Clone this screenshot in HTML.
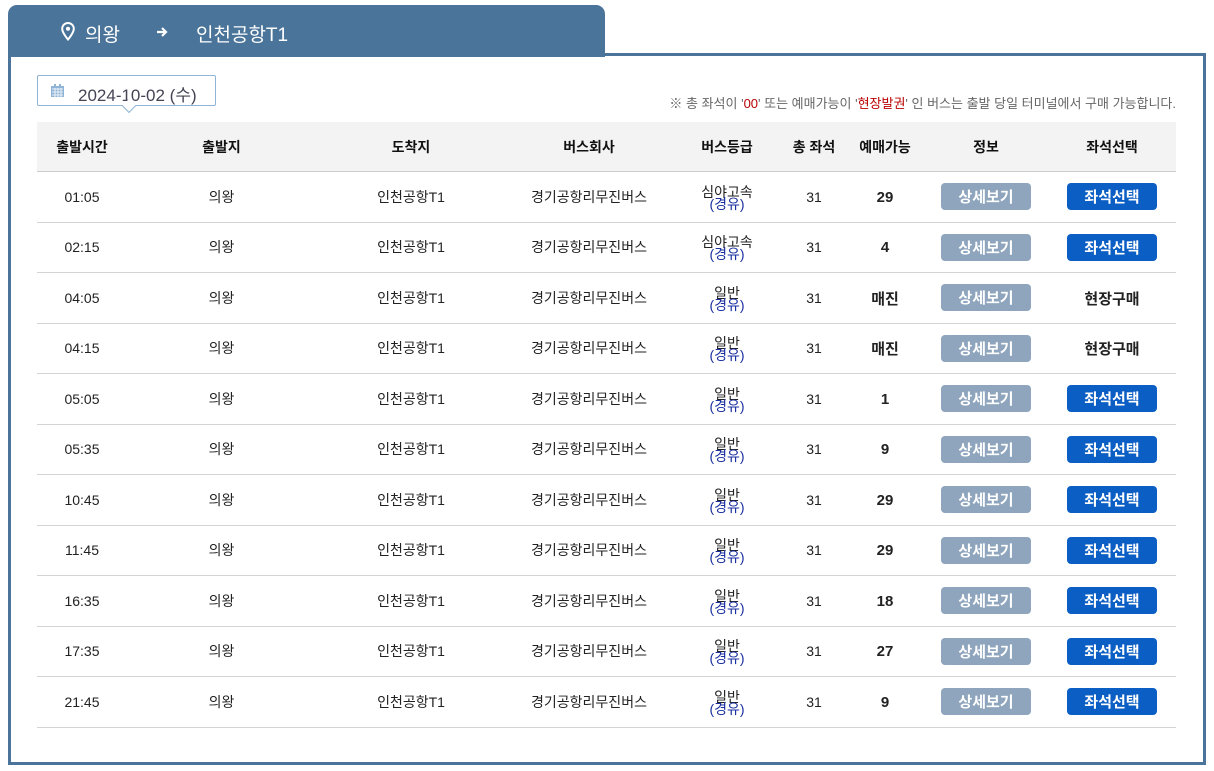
<!DOCTYPE html>
<html><head><meta charset="utf-8"><style>
*{margin:0;padding:0;box-sizing:border-box}
body{width:1214px;height:771px;background:#fff;position:relative;font-family:"Liberation Sans","Noto Sans CJK KR","NanumGothic",sans-serif;color:#222;overflow:hidden}
.tab{position:absolute;left:8px;top:5px;width:597px;height:52px;background:#4a7499;border-radius:9px 9px 0 0}
.tab span{position:absolute;top:15px;color:#fff;font-size:19px}
.box{position:absolute;left:8px;top:53px;width:1198px;height:712px;border:3px solid #4a7499;border-top:none}
.boxtop{position:absolute;left:605px;top:53px;width:601px;height:3px;background:#4a7499}
.date{position:absolute;left:37px;top:75px;width:179px;height:31px;border:1px solid #8fb4d6;border-radius:2px;font-size:17px;color:#445;padding:5px 0 0 40px}
.date:after{content:"";position:absolute;left:86px;bottom:-6px;width:9px;height:9px;background:#fff;border-right:1px solid #8fb4d6;border-bottom:1px solid #8fb4d6;transform:rotate(45deg)}
.note{position:absolute;right:38px;top:93px;font-size:13px;color:#666}
.note b{font-weight:normal;color:#b00}
.hdr{position:absolute;left:37px;top:122px;width:1139px;height:50px;background:#f3f3f3;border-bottom:1px solid #ccc}
.row{position:absolute;left:37px;width:1139px;height:51px;border-bottom:1px solid #d4d4d4}
.c{position:absolute;top:0;height:100%;display:flex;align-items:center;justify-content:center;font-size:14px}
.hdr .c{font-weight:bold;font-size:14px;color:#111}
.g{flex-direction:column;line-height:12px;padding-top:2px}
.g i{font-style:normal;color:#1a2fa0}
.btn{width:90px;height:27px;border-radius:4px;color:#fff;font-weight:bold;font-size:15px;display:flex;align-items:center;justify-content:center}
.gray{background:#8ea5bd}.blue{background:#0b5ec3}
.bold{font-weight:bold;font-size:15px;padding-top:1px}
</style></head><body>
<div class="tab">
<svg style="position:absolute;left:53px;top:17px" width="14" height="19" viewBox="0 0 14 19"><path d="M7 1C3.7 1 1.2 3.5 1.2 6.7 1.2 10.8 7 17.5 7 17.5S12.8 10.8 12.8 6.7C12.8 3.5 10.3 1 7 1Z" fill="none" stroke="#fff" stroke-width="2"/><circle cx="7" cy="6.7" r="2" fill="#fff"/></svg>
<span style="left:77px">의왕</span>
<svg style="position:absolute;left:148px;top:21px" width="12" height="12" viewBox="0 0 12 12"><path d="M1 6h9M6 2l4 4-4 4" fill="none" stroke="#fff" stroke-width="2.2"/></svg>
<span style="left:188px">인천공항T1</span>
</div>
<div class="boxtop"></div>
<div class="box"></div>
<div class="date"><svg style="position:absolute;left:13px;top:8px" width="13" height="13" viewBox="0 0 13 13"><rect x="0" y="2" width="13" height="11" fill="#8fb4d6"/><rect x="3" y="0" width="2" height="3" fill="#8fb4d6"/><rect x="8" y="0" width="2" height="3" fill="#8fb4d6"/><path d="M1 5h11M1 8h11M1 11h11M4 4v9M7 4v9M10 4v9" stroke="#fff" stroke-width=".8"/></svg>2024-10-02 (수)</div>
<div class="note">※ 총 좌석이 '<b>00</b>' 또는 예매가능이 '<b>현장발권</b>' 인 버스는 출발 당일 터미널에서 구매 가능합니다.</div>
<div class="hdr">
<div class="c" style="left:0;width:90px">출발시간</div>
<div class="c" style="left:90px;width:189px">출발지</div>
<div class="c" style="left:279px;width:190px">도착지</div>
<div class="c" style="left:469px;width:166px">버스회사</div>
<div class="c" style="left:635px;width:110px">버스등급</div>
<div class="c" style="left:745px;width:64px">총 좌석</div>
<div class="c" style="left:809px;width:78px">예매가능</div>
<div class="c" style="left:887px;width:124px">정보</div>
<div class="c" style="left:1011px;width:128px">좌석선택</div>
</div>
<div id="rows"></div>
<script>
var d=[["01:05","심야고속","29",1],["02:15","심야고속","4",1],["04:05","일반","매진",0],["04:15","일반","매진",0],["05:05","일반","1",1],["05:35","일반","9",1],["10:45","일반","29",1],["11:45","일반","29",1],["16:35","일반","18",1],["17:35","일반","27",1],["21:45","일반","9",1]];
var h="";
d.forEach(function(r,i){var t=172+i*50.5;
h+='<div class="row" style="top:'+t+'px;height:50.5px">'+
'<div class="c" style="left:0;width:90px">'+r[0]+'</div>'+
'<div class="c" style="left:90px;width:189px">의왕</div>'+
'<div class="c" style="left:279px;width:190px">인천공항T1</div>'+
'<div class="c" style="left:469px;width:166px">경기공항리무진버스</div>'+
'<div class="c g" style="left:635px;width:110px"><span>'+r[1]+'</span><i>(경유)</i></div>'+
'<div class="c" style="left:745px;width:64px">31</div>'+
'<div class="c bold" style="left:809px;width:78px">'+r[2]+'</div>'+
'<div class="c" style="left:887px;width:124px"><div class="btn gray">상세보기</div></div>'+
'<div class="c" style="left:1011px;width:128px">'+(r[3]?'<div class="btn blue">좌석선택</div>':'<span class="bold">현장구매</span>')+'</div></div>';});
document.getElementById("rows").innerHTML=h;
</script>
</body></html>
